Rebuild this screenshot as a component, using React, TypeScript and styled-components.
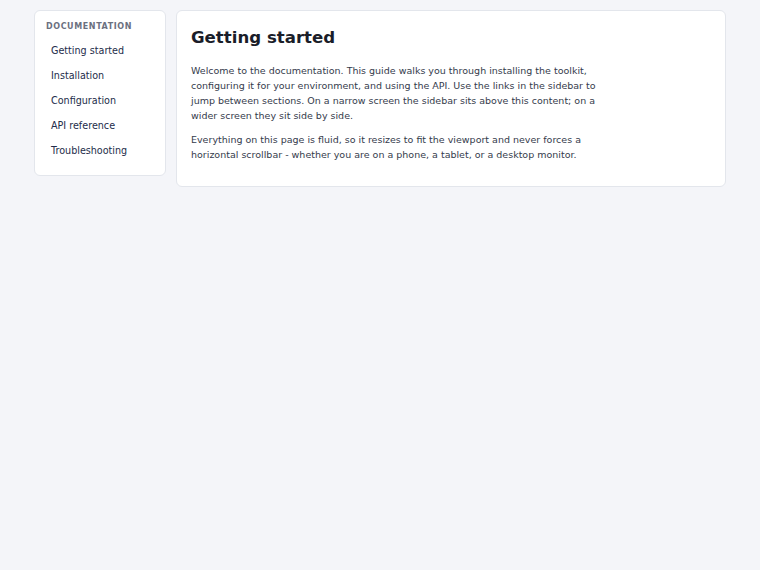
import React from 'react';
import styled, { createGlobalStyle } from 'styled-components';

const GlobalStyle = createGlobalStyle`
    html, body {
        margin: 0;
        padding: 0;
        background: #f4f5f9;
        font-family: 'DejaVu Sans', 'Liberation Sans', sans-serif;
        color: #1f2433;
    }
`

const Page = styled.div`
    display: flex;
    align-items: flex-start;
    gap: 10px;
    padding: 10px 34px;
`

const Card = styled.div`
    background: #fff;
    border: 1px solid #e3e6ec;
    border-radius: 6px;
`

const Sidebar = styled(Card)`
    flex: 0 0 132px;
    box-sizing: border-box;
    padding: 11px 11px 12px;
`

const SidebarHeading = styled.div`
    font-size: 8px;
    font-weight: 700;
    letter-spacing: 0.6px;
    text-transform: uppercase;
    color: #6b7080;
    margin-bottom: 7px;
`

const NavList = styled.nav`
    display: flex;
    flex-direction: column;
`

const NavLink = styled.a`
    display: block;
    padding: 5px 5px;
    line-height: 15px;
    font-size: 9.6px;
    color: #232c4a;
    text-decoration: none;
    border-radius: 4px;
`

const Content = styled(Card)`
    flex: 1;
    padding: 15px 14px 24px;
`

const Title = styled.h1`
    margin: 0 0 13px;
    font-size: 16.6px;
    line-height: 24px;
    font-weight: 700;
    color: #1a1d29;
`

const Paragraph = styled.p`
    margin: 0 0 9px;
    max-width: 416px;
    font-size: 9.5px;
    line-height: 15px;
    color: #353b4c;

    &:last-child {
        margin-bottom: 0;
    }
`

const links = ['Getting started', 'Installation', 'Configuration', 'API reference', 'Troubleshooting'];

const App: React.FC = () => {
    return (
        <>
            <GlobalStyle />
            <Page>
                <Sidebar>
                    <SidebarHeading>Documentation</SidebarHeading>
                    <NavList>
                        {links.map(link => (
                            <NavLink key={link} href="#">{link}</NavLink>
                        ))}
                    </NavList>
                </Sidebar>
                <Content>
                    <Title>Getting started</Title>
                    <Paragraph>
                        Welcome to the documentation. This guide walks you through installing the toolkit,
                        configuring it for your environment, and using the API. Use the links in the sidebar to
                        jump between sections. On a narrow screen the sidebar sits above this content; on a
                        wider screen they sit side by side.
                    </Paragraph>
                    <Paragraph>
                        Everything on this page is fluid, so it resizes to fit the viewport and never forces a
                        horizontal scrollbar - whether you are on a phone, a tablet, or a desktop monitor.
                    </Paragraph>
                </Content>
            </Page>
        </>
    )
}

export default App;
